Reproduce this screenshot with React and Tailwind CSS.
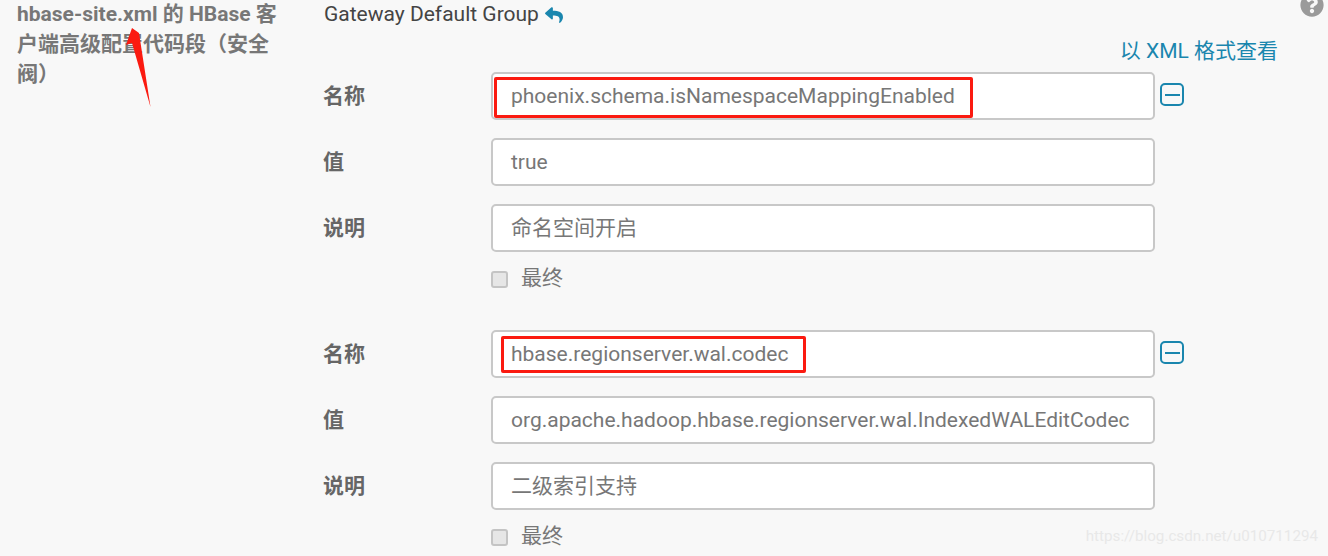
// Config snippet panel: hbase-site.xml safety valve, two name/value groups
import { FaQuestionCircle, FaReply } from "react-icons/fa";

const FONT = "font-['Roboto','Noto_Sans_CJK_SC',sans-serif]";

const GROUPS = [
  {
    name: "phoenix.schema.isNamespaceMappingEnabled",
    value: "true",
    note: "命名空间开启",
    highlight: "left-[1px] top-[3px] w-[479px] h-[41px]",
  },
  {
    name: "hbase.regionserver.wal.codec",
    value: "org.apache.hadoop.hbase.regionserver.wal.IndexedWALEditCodec",
    note: "二级索引支持",
    highlight: "left-[8px] top-[4px] w-[305px] h-[37px]",
  },
];

function Field({ label, value, highlight, remove }) {
  return (
    <div className="flex items-center">
      <div className="w-[168px] pt-[2px] text-[21px] font-bold text-[#666]">{label}</div>
      <div className="relative w-[664px] h-[48px] flex items-center px-[18px] pt-[2px] bg-white border-2 border-[#c8c8c8] rounded-[5px] text-[21px] text-[#777] whitespace-nowrap">
        {value}
        {highlight && (
          <div className={`absolute border-[3px] border-[#fb1a10] rounded-[2px] ${highlight}`}></div>
        )}
      </div>
      {remove && (
        <button className="ml-[5px] -mt-[3px] w-[24px] h-[23px] flex items-center justify-center border-2 border-[#1a86ae] rounded-[5px]">
          <span className="block w-[15px] h-[2px] bg-[#1a86ae]"></span>
        </button>
      )}
    </div>
  );
}

function App() {
  return (
    <div className={`relative flex w-[1328px] h-[556px] overflow-hidden bg-[#f8f8f8] ${FONT}`}>
      {/* Left title */}
      <div className="w-[323px] shrink-0 pl-[17px] pr-[40px] -mt-px text-[21px] leading-[30px] font-bold text-[#777]">
        hbase-site.xml 的 HBase 客户端高级配置代码段（安全阀）
      </div>

      {/* Right column */}
      <div className="flex-1">
        <div className="flex items-center gap-[6px] h-[30px] pl-px text-[21px] text-[#444]">
          Gateway Default Group
          <FaReply className="w-[18px] h-[18px] text-[#1a86ae]" />
        </div>
        <div className="h-[42px] pr-[50px] pt-[5px] text-right text-[21px] leading-[32px] text-[#1a86ae]">
          以 XML 格式查看
        </div>

        <div className="flex flex-col gap-[42px]">
          {GROUPS.map((g) => (
            <div key={g.name} className="flex flex-col gap-[18px]">
              <Field label="名称" value={g.name} highlight={g.highlight} remove />
              <Field label="值" value={g.value} />
              <Field label="说明" value={g.note} />
              <div className="flex items-center h-[18px] pl-[168px] text-[21px] text-[#777]">
                <span className="w-[17px] h-[17px] bg-[#e6e6e6] border-2 border-[#c4c4c4] rounded-[3px]"></span>
                <span className="ml-[13px]">最终</span>
              </div>
            </div>
          ))}
        </div>
      </div>

      {/* Help icon, clipped by the top of the panel */}
      <FaQuestionCircle className="absolute left-[1300px] top-[-7px] w-[24px] h-[24px] text-[#9a9a9a]" />

      {/* Red arrow annotation */}
      <svg className="absolute left-[125px] top-[25px]" width="30" height="85" viewBox="0 0 30 85" fill="#fb1a10">
        <path d="M7 3 L1 20 L7 18 L25.5 82 L14 8 Z" />
      </svg>

      {/* Watermark */}
      <div className="absolute right-[10px] bottom-[8px] text-[15.2px] text-[#e8e8e8]">
        https://blog.csdn.net/u010711294
      </div>
    </div>
  );
}

export default App;
